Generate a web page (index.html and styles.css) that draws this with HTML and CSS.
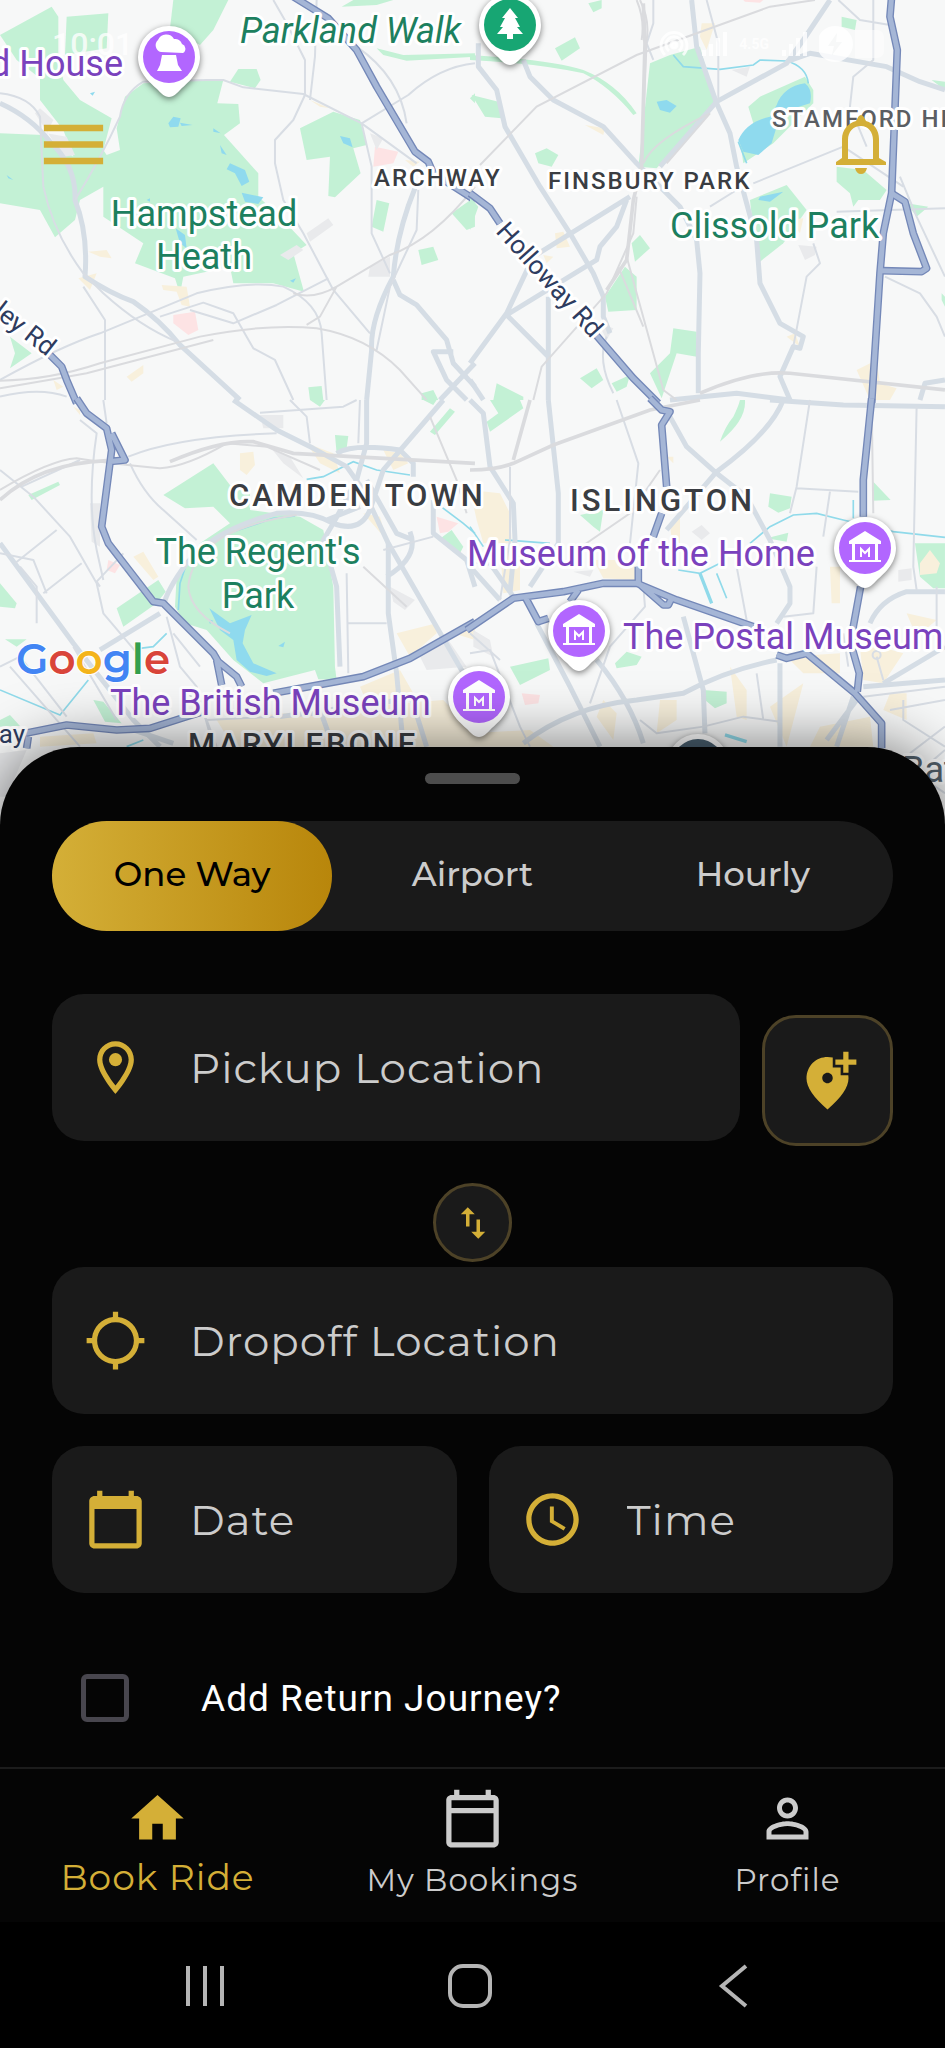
FILE: index.html
```
<!DOCTYPE html>
<html lang="en">
<head>
    <meta charset="UTF-8">
    <meta name="viewport" content="width=device-width, initial-scale=1.0">
    <title>Book Ride</title>
    <link rel="stylesheet" href="styles.css">
</head>
<body>
    <div class="app">
        <header class="map-area">
            <svg class="map" viewBox="0 0 945 800" preserveAspectRatio="xMidYMin slice" role="img" aria-label="Map of London">
                <defs>
                    <path id="pin-shape" d="M0 40C-5 40-8 36-12 32C-17 27-31 17-31 0A31 31 0 0 1 31 0C31 17 17 27 12 32C8 36 5 40 0 40Z"/>
                    <g id="museum">
                        <use href="#pin-shape" class="pin"/>
                        <circle r="26" fill="#b266ff"/>
                        <path d="M-16-7L0-17L16-7V-4H-16ZM-13-4H-10V12H-13ZM10-4H13V12H10ZM-16 12H16V14H-16Z" fill="#fff"/>
                        <path d="M-4 9V1L0 5L4 1V9" fill="none" stroke="#fff" stroke-width="2"/>
                    </g>
                </defs>

                <!-- north west tile -->
                <g transform="scale(.3333)">
                    <g class="park">
                        <path d="M0 105L155 20L175 50V165L190 240L240 300L335 355L310 450L320 465L360 450L350 385L375 290L430 250L600 240L670 240L652 310L715 312L720 370L672 405L775 520L775 590L830 640L920 735L880 760L912 875L820 850H700L690 800L550 830L540 882L525 835L405 790L430 730L310 650V560L240 600L225 660L165 712L120 630L0 610V400L130 405L220 470L190 390L120 300V235L50 180Z"/>
                        <path d="M200 50L325 40L320 145L195 165Z"/>
                        <path d="M520 0L510 85L600 135L640 90L685 0Z"/>
                        <path d="M715 207H770L782 240L765 265L690 245Z"/>
                        <path d="M900 385L1000 335L1080 360L1100 435L1060 445L1082 520L1005 592L985 588L990 470L920 480Z"/>
                        <path d="M1130 600L1168 610L1150 695L1115 680Z"/>
                        <path d="M1355 640L1425 590V680L1400 690Z"/>
                        <path d="M1255 750L1300 740L1315 780L1265 795Z"/>
                        <path d="M30 1010L95 1060L30 1105L45 1060Z"/>
                        <path d="M925 1162L965 1158L970 1200H930Z"/>
                        <path d="M1025 20L1060 0H1180L1130 15Z"/>
                        <path d="M1130 145L1210 165L1425 160V170L1220 182L1150 165Z"/>
                        <path d="M1410 295L1425 280V310ZM1265 1180L1300 1170L1315 1200H1265Z"/>
                    </g>
                    <g class="pink">
                        <path d="M1125 440L1195 455L1180 490L1120 500ZM520 945L585 935L595 990L565 1005L520 970Z"/>
                    </g>
                    <g class="water">
                        <path d="M505 370L520 350L542 355L535 380L510 382ZM540 368L578 375L545 378ZM640 385L662 400L640 395ZM660 435L680 465L665 460ZM690 490L735 510L748 545L725 558L705 520L680 508ZM725 578L790 592L775 612L735 605ZM527 685L555 705L560 745L540 730ZM870 842L888 835L880 848ZM1020 408L1050 415L1058 442L1030 430ZM20 525L40 540L25 535ZM185 288L200 298ZM270 280L285 275L278 287ZM440 600L450 595V605Z"/>
                    </g>
                    <g class="block">
                        <path d="M920 700L985 655L1000 675L930 725ZM840 765L890 735L910 750L865 780ZM105 340L120 325L160 360L140 400L200 410L225 465L190 470ZM1110 400L1150 415L1130 450ZM1110 800L1170 770V830L1105 830Z"/>
                    </g>
                    <g class="sand">
                        <path d="M265 755L320 750L335 775L300 770ZM380 1130L430 1095V1120L395 1145ZM485 855L560 860L570 920L545 915L530 875L490 870ZM930 300L990 325L960 320ZM1215 480L1260 485L1240 500ZM160 1140L190 1160L170 1170ZM235 835L290 820L270 870Z"/>
                    </g>
                    <g class="road wide">
                        <path d="M0 310Q90 350 150 425Q230 500 225 600Q265 700 255 830Q330 880 400 905Q480 960 540 1035L720 1200"/>
                        <path d="M1245 565Q1190 700 1180 830Q1110 960 1115 1050L1100 1200"/>
                        <path d="M1180 840L1200 885L1250 915L1340 1020L1360 1090L1425 1160"/>
                        <path d="M1360 1055H1300L1340 1140L1400 1200M1425 1090L1320 1200"/>
                    </g>
                    <g class="road">
                        <path d="M0 280Q90 290 120 350L130 560Q160 700 250 820L310 880Q420 980 530 1025"/>
                        <path d="M225 600Q300 480 360 350Q370 280 430 245L620 240H670L730 262L910 282L1085 370L1250 490"/>
                        <path d="M820 0L860 70L915 180V285L880 360L825 420V490L850 600L910 700L1000 870L1110 1000"/>
                        <path d="M950 0L945 170L930 300M1070 140Q1200 230 1220 370M1085 370L1225 285Q1320 200 1425 190"/>
                        <path d="M1085 370L1115 500V700L1170 820M250 860L315 960V1200"/>
                        <path d="M480 950L610 908L700 940L740 1010L760 1045L825 1080L880 1200M570 930L700 970L830 915L985 835"/>
                        <path d="M0 1140Q180 1040 300 1000L590 880Q750 840 850 860Q960 910 965 1000L980 1200"/>
                        <path d="M0 1190Q120 1160 200 1190M1255 570L1250 690L1170 860L1130 1050"/>
                    </g>
                    <g class="rail">
                        <path d="M0 1142Q150 1140 300 1090L600 1010Q800 970 950 985Q1100 1010 1200 1110L1280 1200"/>
                        <path d="M0 1165Q150 1140 260 1120L640 1020M1425 560Q1300 720 1170 765L1010 860Q940 900 880 880M1010 860L960 950L920 975"/>
                    </g>
                    <g class="highway">
                        <path id="hw-a1" d="M880 -10L985 55L1070 150L1130 260L1245 455L1285 485L1300 520L1425 600"/>
                        <path id="hw-a41" d="M150 1065L185 1100L200 1140L230 1210"/>
                    </g>
                    <g class="highway-core">
                        <use href="#hw-a1"/><use href="#hw-a41"/>
                    </g>
                </g>

                <!-- north east tile -->
                <g transform="translate(470 0) scale(.3333)">
                    <g class="park">
                        <path d="M540 190L600 165L690 140L735 310L560 505L505 500Z"/>
                        <path d="M255 145L315 112L330 145L275 182ZM5 285L85 305L95 355L45 350ZM195 460L230 445L265 465L245 500L205 490ZM355 10L395 0V25L370 37ZM1115 50L1160 60L1155 90L1115 80Z"/>
                        <path d="M835 320L870 290L1005 230L1030 270V310L910 430L820 490L810 420L850 370Z"/>
                        <path d="M840 600L950 555L1010 630L940 730L870 785L850 690Z"/>
                        <path d="M1100 500L1180 510L1250 570L1230 600L1165 600L1150 620L1140 580L1100 545Z"/>
                        <path d="M485 730L510 705L540 745L495 785ZM465 800L500 830V930L415 935L405 890ZM610 985L680 995V1070L620 1060L575 1195L540 1120L600 1060ZM330 1135L380 1105L400 1140L365 1165ZM425 1150L480 1125L470 1160L440 1175ZM80 1150L160 1190V1200H70ZM1310 610L1375 620L1340 650ZM1385 240L1425 245V270ZM1415 880L1425 890V920L1415 900ZM0 590L25 620L0 690Z"/>
                        <path d="M0 165Q250 180 340 210Q440 250 500 340L490 345Q420 260 340 220Q200 190 0 180Z"/>
                    </g>
                    <g class="water">
                        <path d="M920 315Q940 260 1005 250Q1030 270 1020 310L910 345L920 380L905 430L865 465L820 455L805 420Q830 365 900 350Z"/>
                        <path d="M560 305L590 300L620 318L600 338L570 330ZM870 590L940 575L900 605L865 600Z"/>
                    </g>
                    <g class="pink"><path d="M820 0H880L870 8L825 5Z"/></g>
                    <g class="sand">
                        <path d="M695 70H735L710 150L690 110ZM345 375L405 385L400 405ZM255 700L280 695L300 740L260 745ZM220 765L250 770L230 790ZM950 1010L975 1000L990 1040ZM1160 1110L1220 1080L1230 1150L1280 1165L1260 1200H1200ZM960 660L1000 655L990 700Z"/>
                    </g>
                    <g class="block">
                        <path d="M785 210L840 200L830 230ZM985 735L1040 740L1035 765L1005 780ZM385 970L430 985L410 1020Z"/>
                    </g>
                    <g class="stream">
                        <path d="M610 165L640 200L750 208L850 195L870 180L950 183Q1010 200 1015 250M805 425L830 490"/>
                    </g>
                    <g class="road wide">
                        <path d="M25 130V200L80 270L105 380L210 560L300 700L370 820L400 890V950L420 1000"/>
                        <path d="M160 180L180 230L250 300L400 380L500 490L630 620L680 720L690 820L685 1060V1180"/>
                        <path d="M665 0L680 140L740 310L780 400L800 500L860 720L870 850L930 970L1000 1010L990 1045L970 1040L930 1130L960 1200"/>
                        <path d="M1080 0L1000 120L950 190L740 305L570 500M950 185L1020 160L1250 200L1350 245L1425 270"/>
                        <path d="M480 590L190 770L110 940L0 1090M470 600L440 680L390 740L380 780L110 945L235 1070V1200M235 890V1080M0 1140L40 1200M600 1200L800 1180L960 1200"/>
                        <path d="M1350 1200L1365 1150L1425 1140"/>
                    </g>
                    <g class="road">
                        <path d="M550 0V70L530 130L550 180M710 0L745 130V300M1105 0L1170 60L1260 75M1210 0V180L1150 230L1140 320L1190 440M850 550L1120 440L1300 560M720 620L800 570M1425 625L1100 635M1030 730L1050 790L1010 830L970 1040M1245 830L1350 880L1400 950L1425 1010M1290 530L1340 650L1425 830"/>
                        <path d="M410 1010Q380 1080 430 1180"/>
                    </g>
                    <g class="rail">
                        <path d="M510 0Q540 60 530 120L515 490"/>
                        <path d="M500 0Q525 60 515 120M30 495L200 320L500 165L900 20L1035 0M520 490Q550 420 720 340L590 490M500 590L490 700L410 880L215 1100L190 1200M470 770L580 1170L620 1200M445 800L520 980"/>
                        <path class="rail-wide" d="M520 10L525 130L515 500L490 600L470 780L410 870M690 1180Q850 1110 960 1120L1425 1170"/>
                    </g>
                    <g class="highway">
                        <path id="hw-a10" d="M1265 -10L1260 50L1282 150L1265 580L1240 700L1230 820L1205 1210"/>
                        <path id="hw-loop" d="M1265 580L1305 605L1330 700L1370 805L1355 815L1235 812"/>
                        <path id="hw-hol" d="M0 580L60 625L90 670M365 990L490 1135L565 1210"/>
                    </g>
                    <g class="highway-core">
                        <use href="#hw-a10"/><use href="#hw-loop"/><use href="#hw-hol"/>
                    </g>
                </g>

                <!-- south west tile -->
                <g transform="translate(0 400) scale(.3333)">
                    <g class="park">
                        <path d="M490 285L640 190L690 255L750 280V330L900 350L970 390L1000 560L1005 800L1010 840L955 838L945 810L790 850L700 780L620 690L555 670L525 620L530 530L600 430L690 370L640 320L555 325Z"/>
                        <path d="M350 625L475 540L497 575L470 610L370 680ZM85 285L175 245L180 255L95 300ZM0 550L50 610L45 625L0 620ZM15 718H80L50 740ZM280 900L310 905L365 970L315 965ZM0 960L30 945L60 978L0 980ZM1290 95L1350 25L1365 35L1305 105ZM1005 105L1045 108L1040 145L1010 160ZM1315 420L1355 390L1390 440L1380 460ZM930 0H975L960 20ZM1270 0H1310L1300 15Z"/>
                    </g>
                    <g class="pink"><path d="M1310 350L1375 370L1345 395L1320 400ZM325 480L360 495L345 520L320 510Z"/></g>
                    <g class="sand">
                        <path d="M720 160L760 155L765 195L740 225L720 210ZM400 470L430 455L475 530L460 540ZM1190 700L1310 670V700L1230 770ZM1080 860L1200 810L1240 880L1110 930ZM920 130L1000 160L1020 220L960 190ZM1150 150L1200 160L1225 190L1180 210ZM220 20L240 30V45ZM120 1010L280 1000L290 1030L120 1040ZM960 930L1330 900L1425 1000V1040H700L650 960ZM1360 700L1425 670V720ZM1090 340L1140 350L1160 420Z"/>
                    </g>
                    <g class="block">
                        <path d="M780 45H850V85H790ZM1170 560L1245 600L1215 630L1180 605ZM810 140L870 170L910 235L850 190ZM1250 750L1345 720L1400 800L1280 810ZM270 310H300V440L275 425ZM0 1060L80 1050L20 1190H0Z"/>
                    </g>
                    <g class="water">
                        <path d="M628 625L690 670L755 645L735 690L728 730L760 790L830 820L800 828L750 815L710 780L700 720L660 690ZM835 738L855 725L850 742ZM625 658L640 662L630 672Z"/>
                    </g>
                    <g class="stream">
                        <path d="M885 348L820 355L700 395M560 490L540 550L535 630M920 238L970 230L1060 185L1130 210L1230 225M1310 310L1390 370L1425 400M420 745L460 740L500 700M0 870L180 945L265 840M380 1040L430 1020"/>
                    </g>
                    <g class="road wide">
                        <path d="M0 430L220 730L400 960L480 1040M300 750L480 640"/>
                        <path d="M700 0L830 90L940 145L1040 200L1090 270L1165 430L1425 880"/>
                        <path d="M1100 0V130L1070 240L1000 370M1330 0L1150 210L1110 330Q1080 400 1000 370Q930 330 830 340Q640 390 560 490Q500 570 490 620M1165 430V640L1190 820L1210 1040M1230 395Q1260 470 1160 530M1000 370L970 420L1010 560L1020 800M1010 160Q1060 130 1200 150L1240 190V230M1100 240L1190 400L1240 420M1300 300V400L1400 480L1425 560M980 360L1080 320"/>
                        <path d="M400 990L520 1030M960 930L1000 1040M1230 880L1280 1040M840 950L1200 900"/>
                    </g>
                    <g class="road">
                        <path d="M0 210L100 290L210 410L290 550L310 640L420 770M65 260L240 180M170 390L45 490M245 490L130 580M370 460L290 545L300 560M140 580L100 480L0 460M390 190Q430 280 490 330L590 420M385 170Q530 110 830 100M870 0L920 50L930 130M780 38L1030 20L1070 0M1040 670H1160M1040 520L1045 820M1150 450L1300 410M1075 130L1080 0M310 0L320 70M110 670V560L60 500M500 650L540 800L590 860L640 1040M520 700L600 800M0 800L60 770L200 950"/>
                        <path d="M240 60L290 100Q260 300 290 450L310 540M220 740L350 960M560 870L620 960M30 800L240 1040M650 1040L620 960L1040 940"/>
                    </g>
                    <g class="rail">
                        <path class="rail-wide" d="M0 300Q120 190 320 182M510 185Q660 120 760 125L880 160L1425 190"/>
                        <path d="M0 270Q150 180 230 175Q320 190 480 205Q560 200 680 130L800 140L960 210M1290 50L1370 240L1400 340M1090 500L1220 620"/>
                        <path d="M890 345Q580 390 565 560Q570 640 690 700"/>
                    </g>
                    <g class="highway">
                        <path id="hw-sw1" d="M230 -5L260 40L320 85L335 150L305 380L325 430L460 605L490 610L640 760L655 785L710 830L725 860M335 100L375 180L325 185M650 780L665 855"/>
                        <path id="hw-sw2" d="M50 1005L200 975L350 990L450 985L560 950L610 935M820 880L1090 830L1230 775L1425 665M85 1010L80 1045"/>
                    </g>
                    <g class="highway-core">
                        <use href="#hw-sw1"/><use href="#hw-sw2"/>
                    </g>
                </g>

                <!-- south east tile -->
                <g transform="translate(470 400) scale(.3333)">
                    <g class="park">
                        <path d="M60 0H150L160 25L60 95L50 65L85 40ZM330 345L400 330L390 395L370 380ZM900 280L965 290L960 325L925 338L895 320ZM1210 245L1262 300L1208 302ZM1335 430H1425V565H1390L1350 530ZM120 800L235 775L240 810L150 855ZM700 870L770 875V910L735 925L705 900ZM435 790L470 755L515 770L500 795L440 805ZM890 415L955 398L950 425ZM825 0Q830 60 750 125Q765 80 790 50Q805 20 810 0Z"/>
                    </g>
                    <g class="pink"><path d="M155 880L210 885L205 910L165 915Z"/></g>
                    <g class="sand">
                        <path d="M0 270L90 280L120 340L125 430L40 430L20 360ZM90 440L150 450V570L100 580ZM370 480L490 480L500 540L400 535ZM590 170H610V190ZM600 370L630 340V430L605 420ZM780 800L830 870V960L800 950ZM1080 500L1110 500V610H1085ZM950 770L1110 760V820L1000 820ZM1170 740H1230L1300 760L1240 850L1180 840ZM570 900H620V960L560 1000ZM0 1000L180 990L250 1040H0ZM900 920L1000 850L950 1040ZM1050 980L1200 950L1210 1040H1020ZM1260 880H1310V960L1240 930ZM400 900L440 940L430 1020L380 950ZM1380 450L1410 490L1400 520L1350 525V490ZM1310 640L1400 660L1340 710Z"/>
                    </g>
                    <g class="block"><path d="M665 395L695 375L720 400L695 420ZM1285 510L1325 505V540L1285 545ZM310 515L370 510L360 530ZM10 690L60 720L70 770L10 740Z"/></g>
                    <g class="stream">
                        <path d="M105 420L240 430M840 430L900 380L970 345L1040 340L1120 360L1270 395L1425 412M1150 300V355M625 510L690 520L750 490M740 520L770 595M0 380L40 440"/>
                        <path stroke-width="10" d="M690 520L725 610M765 1005L830 1025"/>
                    </g>
                    <g class="road wide">
                        <path d="M0 0L40 40L60 200L130 310L135 420L120 580M235 0L265 280V430L180 560M600 50L650 140L740 220L830 290L900 420L960 560V610L920 670M940 0Q900 100 740 215L590 390M900 0L1120 15L1425 20M1425 575H1310Q1230 600 1200 670M130 590L60 490L0 480M200 670L300 860L390 1040M380 780Q480 900 520 1030M160 1030Q300 920 500 900L640 880Q770 810 920 780M930 790L930 1040M640 650L700 870L705 1000M1240 850L1425 740M1150 890L1100 1040M1180 860L1425 840M0 500L90 600M1160 900L1070 1020"/>
                    </g>
                    <g class="road">
                        <path d="M1020 0L980 260L960 340M980 265L1165 275M1080 275L1060 410M1340 20L1330 500L1340 570M440 0L505 190L480 430M800 500L830 660M1040 500L1030 640L940 650M520 560L525 620L420 740L360 910M860 820L880 960M510 960L560 1000L700 980L820 950L930 965M1135 800L1120 700M1180 890L1425 860M1300 900V960L1425 1040M1220 770L1240 840M0 760L60 750L150 980L180 1040M120 200V420L90 600M0 700L90 780M1260 930L1425 900M1400 560V720"/>
                        <path d="M1250 1060L1425 1180M1425 980L1320 1060M1390 1080L1425 1050"/>
                        <circle cx="1220" cy="765" r="12"/>
                    </g>
                    <g class="rail">
                        <path class="rail-wide" d="M0 210Q80 210 130 190L250 135L540 30L690 0M180 0L130 180"/>
                        <path d="M1205 0L1210 340M320 450L480 340L570 210"/>
                    </g>
                    <g class="highway">
                        <path id="hw-se1" d="M540 -5L575 30L600 35L575 75L590 260M575 340L550 410M505 500V545M-10 690L130 595L280 575L400 550H500L620 600L850 680M500 545L580 615H595L605 595M165 590L205 665L235 655M325 570L300 605"/>
                        <path id="hw-se2" d="M1205 -5L1180 240V350M1172 560L1150 680L1148 750L1168 820L1162 875M920 765L950 775L1010 760L1155 880L1235 970V1045"/>
                    </g>
                    <g class="highway-core">
                        <use href="#hw-se1"/><use href="#hw-se2"/>
                    </g>
                </g>

                <!-- place names -->
                <g class="place">
                    <text class="poi" x="123" y="76" text-anchor="end">d House</text>
                    <text class="green italic" x="240" y="43">Parkland Walk</text>
                    <text class="area small" x="374" y="186">ARCHWAY</text>
                    <text class="area small" x="548" y="189">FINSBURY PARK</text>
                    <text class="area small light" x="772" y="127">STAMFORD HI</text>
                    <text class="green" x="204" y="226" text-anchor="middle">Hampstead</text>
                    <text class="green" x="204" y="269" text-anchor="middle">Heath</text>
                    <text class="green" x="670" y="238">Clissold Park</text>
                    <text class="street" transform="translate(495 232) rotate(48)">Holloway Rd</text>
                    <text class="street" transform="translate(47 357) rotate(38)" text-anchor="end">ley Rd</text>
                    <text class="area" x="229" y="506">CAMDEN TOWN</text>
                    <text class="area" x="570" y="511">ISLINGTON</text>
                    <text class="green" x="258" y="564" text-anchor="middle">The Regent's</text>
                    <text class="green" x="258" y="608" text-anchor="middle">Park</text>
                    <text class="poi" x="467" y="566">Museum of the Home</text>
                    <text class="poi" x="623" y="649">The Postal Museum</text>
                    <text class="poi" x="110" y="715">The British Museum</text>
                    <text class="area" x="188" y="755">MARYLEBONE</text>
                    <text class="street" x="25" y="743" text-anchor="end">ay</text>
                    <text class="slate" x="902" y="782">Bat</text>
                </g>

                <!-- pins -->
                <g transform="translate(169 57)">
                    <use href="#pin-shape" class="pin"/>
                    <circle r="26" fill="#b266ff"/>
                    <path d="M-8-5A7 7 0 0 1-11-17A9 9 0 0 1 5-18A7 7 0 0 1 13-13A5 5 0 0 1 14-4ZM-7-2H7L9 8L13 14H-12L-9 8Z" fill="#fff"/>
                </g>
                <g transform="translate(510 25)">
                    <use href="#pin-shape" class="pin"/>
                    <circle r="26" fill="#17a673"/>
                    <path d="M0-17L8-7H5L10 2H7L13 9H3V14H-3V9H-13L-7 2H-10L-5-7H-8Z" fill="#fff"/>
                </g>
                <use href="#museum" x="865" y="548"/>
                <use href="#museum" x="579" y="631"/>
                <use href="#museum" x="479" y="697"/>
                <g transform="translate(698 765)">
                    <use href="#pin-shape" class="pin"/>
                    <circle r="26" fill="#4a6070"/>
                </g>

                <text class="google" x="16" y="674"><tspan fill="#4285f4">G</tspan><tspan fill="#d9453a">o</tspan><tspan fill="#f4b41a">o</tspan><tspan fill="#4285f4">g</tspan><tspan fill="#34a04f">l</tspan><tspan fill="#d9453a">e</tspan></text>
            </svg>

            <div class="overlay">
                <div class="status-bar">
                    <span class="clock">10:01</span>
                    <div class="status-icons">
                        <svg width="30" height="30" viewBox="0 0 30 30" fill="none" stroke="currentColor" stroke-width="3">
                            <path d="M6 26A13 13 0 1 1 24 26M10 22A8 8 0 1 1 20 22"/>
                            <circle cx="15" cy="16" r="3" fill="currentColor"/>
                        </svg>
                        <svg width="26" height="24" viewBox="0 0 26 24" fill="currentColor">
                            <path d="M1 18H5V24H1ZM8 12H12V24H8ZM15 6H19V24H15ZM22 0H26V24H22Z"/>
                        </svg>
                        <span class="network">4.5G</span>
                        <svg width="26" height="24" viewBox="0 0 26 24" fill="currentColor">
                            <path d="M1 18H5V24H1ZM8 12H12V24H8ZM15 6H19V24H15ZM22 0H26V24H22Z"/>
                        </svg>
                        <svg width="66" height="36" viewBox="0 0 66 36" fill="currentColor">
                            <path fill-rule="evenodd" d="M16 0A18 18 0 1 0 16 36A18 18 0 0 0 16 0ZM18 7L9 20H15L13 29L23 16H17Z"/>
                            <path d="M36 4H58A7 7 0 0 1 65 11V25A7 7 0 0 1 58 32H36Z" opacity=".6"/>
                        </svg>
                    </div>
                </div>
                <div class="top-bar">
                    <button class="icon-btn" type="button" aria-label="Menu">
                        <svg width="79" height="79" viewBox="0 0 24 24"><path d="M3 18h18v-2H3v2zm0-5h18v-2H3v2zm0-7v2h18V6H3z"/></svg>
                    </button>
                    <button class="icon-btn bell" type="button" aria-label="Notifications">
                        <svg width="50" height="60" viewBox="0 0 50 60">
                            <path fill-rule="evenodd" d="M25 0C27 0 28 2 30 6C38 8 43 15 43 24V43L50 47V50H0V47L6 43V24C6 15 12 8 20 6C22 2 23 0 25 0ZM25 11C17 11 12 17 12 25V44H37V25C37 17 32 11 25 11Z"/>
                            <path d="M19 53H31C30 57 28 59 25 59S20 57 19 53Z"/>
                        </svg>
                    </button>
                </div>
            </div>
        </header>

        <main class="sheet">
            <div class="handle"></div>

            <div class="tabs">
                <button class="tab active" type="button">One Way</button>
                <button class="tab" type="button">Airport</button>
                <button class="tab" type="button">Hourly</button>
            </div>

            <form class="booking">
                <div class="pickup-row">
                    <label class="field" for="pickup">
                        <svg class="icon" viewBox="0 0 24 24"><path d="M12 2C8.13 2 5 5.13 5 9c0 5.25 7 13 7 13s7-7.75 7-13c0-3.87-3.13-7-7-7zM7 9c0-2.76 2.24-5 5-5s5 2.24 5 5c0 2.88-2.88 7.19-5 9.88C9.92 16.21 7 11.85 7 9z"/><circle cx="12" cy="9" r="2.5"/></svg>
                        <input type="text" id="pickup" placeholder="Pickup Location" aria-label="Pickup Location">
                    </label>
                    <button class="add-stop" type="button" aria-label="Add stop">
                        <svg class="icon" viewBox="0 0 24 24"><path d="M20 1v3h3v2h-3v3h-2V6h-3V4h3V1h2zM12 13c1.1 0 2-.9 2-2s-.9-2-2-2-2 .9-2 2 .9 2 2 2zm2-9.75V7h3v3h2.92c.05.39.08.79.08 1.2 0 3.32-2.67 7.25-8 11.8-5.33-4.55-8-8.48-8-11.8C4 6.22 7.8 3 12 3c.68 0 1.35.08 2 .25z"/></svg>
                    </button>
                </div>

                <button class="swap" type="button" aria-label="Swap locations">
                    <svg width="42" height="42" viewBox="0 0 24 24"><path d="M16 17.01V10h-2v7.01h-3L15 21l4-3.99h-3zM9 3L5 6.99h3V14h2V6.99h3L9 3z"/></svg>
                </button>

                <label class="field" for="dropoff">
                    <svg class="icon" viewBox="0 0 24 24"><path d="M20.94 11c-.46-4.17-3.77-7.48-7.94-7.94V1h-2v2.06C6.83 3.52 3.52 6.83 3.06 11H1v2h2.06c.46 4.17 3.77 7.48 7.94 7.94V23h2v-2.06c4.17-.46 7.48-3.77 7.94-7.94H23v-2h-2.06zM12 19c-3.87 0-7-3.13-7-7s3.13-7 7-7 7 3.13 7 7-3.13 7-7 7z"/></svg>
                    <input type="text" id="dropoff" placeholder="Dropoff Location" aria-label="Dropoff Location">
                </label>

                <div class="when-row">
                    <label class="field" for="date">
                        <svg class="icon" viewBox="0 0 24 24"><path d="M20 3h-1V1h-2v2H7V1H5v2H4c-1.1 0-2 .9-2 2v16c0 1.1.9 2 2 2h16c1.1 0 2-.9 2-2V5c0-1.1-.9-2-2-2zm0 18H4V8h16v13z"/></svg>
                        <input type="text" id="date" placeholder="Date" aria-label="Date">
                    </label>
                    <label class="field" for="time">
                        <svg class="icon" viewBox="0 0 24 24"><path d="M11.99 2C6.47 2 2 6.48 2 12s4.47 10 9.99 10C17.52 22 22 17.52 22 12S17.52 2 11.99 2zM12 20c-4.42 0-8-3.58-8-8s3.58-8 8-8 8 3.58 8 8-3.58 8-8 8zm.5-13H11v6l5.25 3.15.75-1.23-4.5-2.67z"/></svg>
                        <input type="text" id="time" placeholder="Time" aria-label="Time">
                    </label>
                </div>

                <div class="return-row">
                    <input type="checkbox" id="returnJourney">
                    <label for="returnJourney">Add Return Journey?</label>
                </div>
            </form>
        </main>

        <nav class="bottom-nav">
            <a href="#book" class="active">
                <svg class="icon" viewBox="0 0 24 24"><path d="M10 20v-6h4v6h5v-8h3L12 3 2 12h3v8z"/></svg>
                <span>Book Ride</span>
            </a>
            <a href="#bookings">
                <svg class="icon" viewBox="0 0 24 24"><path d="M20 3h-1V1h-2v2H7V1H5v2H4c-1.1 0-2 .9-2 2v16c0 1.1.9 2 2 2h16c1.1 0 2-.9 2-2V5c0-1.1-.9-2-2-2zm0 2v3H4V5h16zM4 21V10h16v11H4z"/></svg>
                <span>My Bookings</span>
            </a>
            <a href="#profile">
                <svg class="icon" viewBox="0 0 24 24"><path d="M12 5.9c1.16 0 2.1.94 2.1 2.1s-.94 2.1-2.1 2.1S9.9 9.16 9.9 8s.94-2.1 2.1-2.1m0 9c2.97 0 6.1 1.46 6.1 2.1v1.1H5.9V17c0-.64 3.13-2.1 6.1-2.1M12 4C9.79 4 8 5.79 8 8s1.79 4 4 4 4-1.79 4-4-1.79-4-4-4zm0 9c-2.67 0-8 1.34-8 4v3h16v-3c0-2.66-5.33-4-8-4z"/></svg>
                <span>Profile</span>
            </a>
        </nav>

        <footer class="system-nav">
            <button type="button" aria-label="Recent apps">
                <svg width="44" height="44" viewBox="0 0 44 44"><path d="M5 2V42M22 2V42M39 2V42"/></svg>
            </button>
            <button type="button" aria-label="Home">
                <svg width="44" height="44" viewBox="0 0 44 44"><rect x="2" y="2" width="40" height="40" rx="13"/></svg>
            </button>
            <button type="button" aria-label="Back">
                <svg width="44" height="44" viewBox="0 0 44 44"><path d="M34 2L10 22L34 42"/></svg>
            </button>
        </footer>
    </div>
</body>
</html>
```
FILE: styles.css
```
:root {
    --gold: #d4af37;
    --gold-dark: #b8860b;
    --background: #050505;
    --surface: #1a1a1a;
    --text: #ffffff;
    --text-light: #cccccc;
}

* {
    box-sizing: border-box;
    margin: 0;
    padding: 0;
}

body {
    font-family: 'Montserrat', 'Inter', sans-serif;
    background: #000;
    color: var(--text);
}

button {
    font: inherit;
    color: inherit;
    background: none;
    border: none;
    cursor: pointer;
}

svg {
    display: block;
}

.app {
    display: flex;
    flex-direction: column;
    min-height: 100vh;
    overflow: hidden;
}

/* Map */
.map-area {
    position: relative;
    height: 830px;
    background: #f7f8f8;
}

.map {
    width: 100%;
    height: 800px;
    font-family: 'Roboto', sans-serif;
}

.park { fill: #c3f1d5; }
.water { fill: #8fdaee; }
.pink { fill: #fde3e4; }
.block { fill: #e9eaec; }
.sand { fill: #f8f0dc; }

.stream {
    fill: none;
    stroke: #90daea;
    stroke-width: 5;
}

.road {
    fill: none;
    stroke: #d8dde4;
    stroke-width: 6;
    stroke-linejoin: round;
}

.road.wide {
    stroke: #d5dde5;
    stroke-width: 15;
}

.rail {
    fill: none;
    stroke: #dadbde;
    stroke-width: 6;
}

.rail-wide {
    stroke-width: 11;
}

.highway {
    fill: none;
    stroke: #7488b8;
    stroke-width: 23;
    stroke-linejoin: round;
}

.highway-core {
    fill: none;
    stroke: #a5b6d6;
    stroke-width: 15;
    stroke-linejoin: round;
}

.place text {
    paint-order: stroke;
    stroke: #fff;
    stroke-width: 6px;
    stroke-linejoin: round;
    font-size: 36px;
}

.place .green { fill: #1d805f; }
.place .poi { fill: #7a42bd; }
.place .slate { fill: #55636e; }
.place .italic { font-style: italic; }

.place .area {
    fill: #3a3d42;
    font-size: 31px;
    font-weight: 500;
    letter-spacing: 3px;
}

.place .small {
    font-size: 24px;
    letter-spacing: 2px;
}

.place .light {
    fill: #5b5e63;
}

.place .street {
    fill: #2e3c60;
    font-size: 26px;
}

.pin {
    fill: #fff;
    filter: drop-shadow(0 2px 3px rgba(0, 0, 0, 0.5));
}

.google {
    font-family: 'Montserrat', 'Inter', sans-serif;
    font-size: 42px;
    font-weight: 600;
    paint-order: stroke;
    stroke: #fff;
    stroke-width: 2px;
}

.overlay {
    position: absolute;
    top: 0;
    left: 0;
    right: 0;
}

.status-bar {
    display: flex;
    justify-content: space-between;
    align-items: center;
    height: 88px;
    padding: 0 60px 0 52px;
    color: rgba(255, 255, 255, 0.8);
}

.clock {
    font-family: 'Roboto', sans-serif;
    font-size: 32px;
    font-weight: 500;
}

.status-icons {
    display: flex;
    align-items: center;
    gap: 12px;
}

.network {
    font-family: 'Roboto', sans-serif;
    font-size: 14px;
    font-weight: 700;
}

.top-bar {
    display: flex;
    justify-content: space-between;
    align-items: center;
    padding: 17px 59px 0 34px;
}

.icon-btn svg {
    fill: var(--gold);
}

/* Booking sheet */
.sheet {
    position: relative;
    display: flex;
    flex-direction: column;
    flex: 1;
    margin-top: -83px;
    padding: 26px 52px 0;
    background: var(--background);
    border-radius: 78px 78px 0 0;
    box-shadow: 0 0 60px 4px rgba(0, 0, 0, 0.5);
}

.handle {
    width: 95px;
    height: 11px;
    margin: 0 auto 37px;
    border-radius: 6px;
    background: #4d4d4d;
}

.tabs {
    display: grid;
    grid-template-columns: repeat(3, 1fr);
    height: 110px;
    border-radius: 55px;
    background: var(--surface);
}

.tab {
    padding-bottom: 4px;
    border-radius: 55px;
    font-size: 34px;
    font-weight: 500;
    color: var(--text-light);
}

.tab.active {
    background: linear-gradient(90deg, var(--gold), var(--gold-dark));
    color: #000;
}

.booking {
    display: flex;
    flex-direction: column;
    margin-top: 63px;
}

.pickup-row {
    display: flex;
    align-items: flex-start;
    gap: 22px;
}

.pickup-row .field {
    flex: 1;
}

.field {
    display: flex;
    align-items: center;
    gap: 43px;
    min-width: 0;
    height: 147px;
    padding: 0 32px;
    border-radius: 32px;
    background: var(--surface);
}

.icon {
    flex: none;
    width: 63px;
    height: 63px;
    fill: var(--gold);
}

.field input {
    flex: 1;
    width: 100%;
    min-width: 0;
    border: none;
    outline: none;
    background: none;
    color: var(--text);
    font-family: inherit;
    font-size: 42px;
    font-weight: 400;
    letter-spacing: 1px;
}

.field input::placeholder {
    color: var(--text-light);
    opacity: 1;
}

.add-stop {
    display: flex;
    flex: none;
    align-items: center;
    justify-content: center;
    width: 131px;
    height: 131px;
    margin-top: 21px;
    border: 3px solid #4d4227;
    border-radius: 34px;
    background: var(--surface);
}

.swap {
    display: flex;
    align-items: center;
    justify-content: center;
    align-self: center;
    width: 79px;
    height: 79px;
    margin: 37px 0 5px;
    border: 3px solid #4d4227;
    border-radius: 50%;
    background: var(--surface);
}

.swap svg {
    fill: var(--gold);
}

.when-row {
    display: grid;
    grid-template-columns: 1fr 1fr;
    gap: 32px;
    margin-top: 32px;
}

.return-row {
    display: flex;
    align-items: center;
    gap: 72px;
    height: 138px;
    margin-top: 36px;
    padding-left: 29px;
}

.return-row input {
    appearance: none;
    width: 48px;
    height: 48px;
    border: 5px solid #48464e;
    border-radius: 6px;
    cursor: pointer;
}

.return-row input:checked {
    background: var(--gold);
    border-color: var(--gold);
}

.return-row label {
    font-family: 'Roboto', sans-serif;
    font-size: 37px;
    letter-spacing: 1px;
}

/* Navigation */
.bottom-nav {
    position: relative;
    display: grid;
    grid-template-columns: repeat(3, 1fr);
    height: 155px;
    padding-top: 18px;
    border-top: 2px solid #1c1c1c;
    background: var(--background);
}

.bottom-nav a {
    display: flex;
    flex-direction: column;
    align-items: center;
    color: var(--text-light);
    font-size: 31px;
    font-weight: 400;
    letter-spacing: 1px;
    line-height: 60px;
    text-decoration: none;
}

.bottom-nav a.active {
    color: var(--gold);
    font-size: 36px;
    line-height: 54px;
}

.bottom-nav .icon {
    fill: currentColor;
}

.system-nav {
    display: flex;
    justify-content: space-between;
    align-items: center;
    height: 126px;
    padding: 2px 189px 0 183px;
    background: #000;
}

.system-nav svg {
    fill: none;
    stroke: #b5b5b5;
    stroke-width: 4;
}
```
